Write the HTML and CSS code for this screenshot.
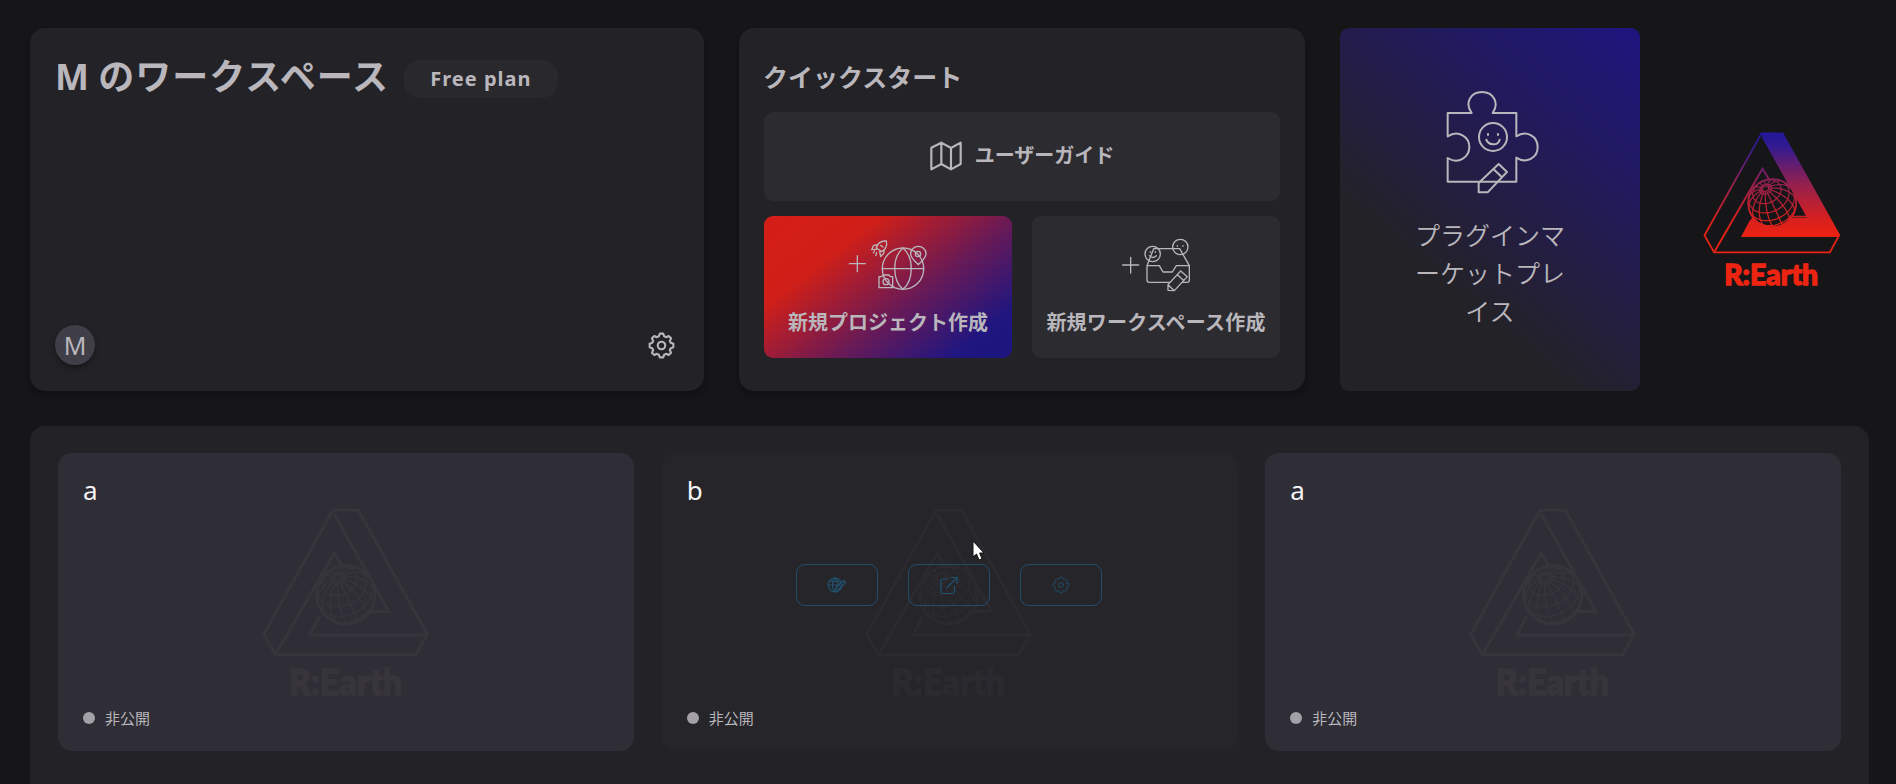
FILE: index.html
```html
<!DOCTYPE html>
<html lang="ja">
<head>
<meta charset="utf-8">
<title>R:Earth</title>
<link rel="stylesheet" href="styles.css">
</head>
<body>
<svg class="defs" width="0" height="0" aria-hidden="true">
  <defs>
    <linearGradient id="brand" gradientUnits="userSpaceOnUse" x1="0" y1="70" x2="0" y2="375">
      <stop offset="0" stop-color="#22199a"/>
      <stop offset="0.12" stop-color="#2f1a92"/>
      <stop offset="0.5" stop-color="#93204f"/>
      <stop offset="0.85" stop-color="#d8201e"/>
      <stop offset="1" stop-color="#e92214"/>
    </linearGradient>
    <symbol id="gear" viewBox="-13 -13 26 26">
      <path d="M11.4-1.6V1.6L8.9 2.6 8 4.4 9.2 6.9 6.9 9.2 4.4 8 2.6 8.9 1.6 11.4H-1.6L-2.6 8.9-4.4 8-6.9 9.2-9.2 6.9-8 4.4-8.9 2.6-11.4 1.6V-1.6L-8.9-2.6-8-4.4-9.2-6.9-6.9-9.2-4.4-8-2.6-8.9-1.6-11.4H1.6L2.6-8.9 4.4-8 6.9-9.2 9.2-6.9 8-4.4 8.9-2.6Z"/>
      <circle r="3.6"/>
    </symbol>
    <g id="globe">
      <circle cx="277" cy="280" r="72"/>
      <path class="globe-grid" d=""/>
    </g>
    <g id="frame">
      <path d="M245 71H308L478 377 450 428H103L74 377ZM248 80L383 321H335M270 213L248 177 105 424M213 332L188 379H478"/>
    </g>
  </defs>
</svg>

<main class="dashboard">
  <section class="panel workspace">
    <div class="workspace-head">
      <h1>M <span>のワークスペース</span></h1>
      <span class="plan">Free plan</span>
    </div>
    <div class="workspace-foot">
      <span class="avatar">M</span>
      <svg class="icon gear" width="27" height="27"><use href="#gear"/></svg>
    </div>
  </section>

  <section class="panel quick">
    <h2>クイックスタート</h2>
    <div class="tile guide">
      <svg class="icon" width="32" height="30" viewBox="-3 -3 96 90" stroke-width="6.500"><path d="M1 17L31 2 60 18 89 2V66L60 82 31 66 1 82ZM31 2V66M60 18V82"/></svg>
      <span>ユーザーガイド</span>
    </div>
    <div class="tiles">
      <div class="tile create project">
        <svg class="icon" width="85" height="57" viewBox="17 29 255 171" stroke-width="4">
          <path d="M27 115H75M51 91V139"/>
          <circle cx="188" cy="130" r="62"/>
          <path d="M126 130H250M188 68C155 96 155 164 188 192M188 68C221 96 221 164 188 192"/>
          <path d="M234 118C222 106 211 98 211 85A23 22 0 0 1 257 85C257 98 246 106 234 118Z"/>
          <circle cx="233" cy="86" r="8"/>
          <path d="M116 154H124L129 149H146L150 154H157V187H116Z"/><circle cx="137" cy="169" r="9"/>
          <path d="M138 47C122 46 111 54 108 68L124 79C136 72 141 61 138 47ZM109 58L99 61 94 73 108 72M132 73L130 84 121 94 118 79M103 77L99 83M109 82L106 91M121 60L128 65"/>
        </svg>
        <span>新規プロジェクト作成</span>
      </div>
      <div class="tile create">
        <svg class="icon" width="75" height="57" viewBox="29 31 225 171" stroke-width="4">
          <path d="M40 121H88M64 98V145"/>
          <path d="M113 123L133 72H211L240 123V166Q240 173 233 173H120Q113 173 113 166ZM113 123H150L161 142H189L201 123H240"/>
          <circle cx="130" cy="88" r="23"/><circle cx="213" cy="67" r="23"/>
          <path d="M120 93Q130 104 141 93M123 81V83M138 81V83M204 63V65M221 63V65"/>
          <path class="knock" d="M176 197V180L214 139 234 156 195 198ZM204 150L224 168M176 180L195 198"/>
        </svg>
        <span class="wide">新規ワークスペース作成</span>
      </div>
    </div>
  </section>

  <section class="market">
    <svg class="icon" width="100" height="107" viewBox="332 205 300 321" stroke-width="6">
      <path d="M355 280H427C405 250 424 217 458 217S511 250 490 280H561V350C591 330 625 350 625 382S591 434 561 414V486H355V415C387 435 420 413 420 382S387 330 355 350Z"/>
      <circle cx="491" cy="352" r="42"/>
      <path d="M471 360Q475 373 491 374T511 360M476 343V346M506 343V346"/>
      <path d="M448 518V490L508 433 533 457 475 518ZM492 448L518 473"/>
    </svg>
    <p>プラグインマーケットプレイス</p>
  </section>

  <div class="brand">
    <svg width="141" height="160" viewBox="67 61 422 480">
      <path fill="url(#brand)" fill-rule="evenodd" d="M245 71H308L478 378H188L216 325H383L248 85Z"/>
      <g class="brand-lines"><use href="#frame"/><use class="ball" href="#globe"/></g>
      <text x="133" y="526" textLength="282" lengthAdjust="spacingAndGlyphs">R:Earth</text>
    </svg>
  </div>

  <section class="panel projects">
    <article class="project-card">
      <svg class="watermark" width="171" height="196" viewBox="65 58 422 484">
        <use href="#frame"/><use class="ball" href="#globe"/>
        <text x="136" y="526" textLength="280" lengthAdjust="spacingAndGlyphs">R:Earth</text>
      </svg>
      <h3>a</h3>
      <div class="status"><i></i>非公開</div>
    </article>

    <article class="project-card hovered">
      <svg class="watermark" width="171" height="196" viewBox="65 58 422 484">
        <use href="#frame"/><use class="ball" href="#globe"/>
        <text x="136" y="526" textLength="280" lengthAdjust="spacingAndGlyphs">R:Earth</text>
      </svg>
      <h3>b</h3>
      <div class="actions">
        <span class="action"><svg width="20" height="18" viewBox="0 0 20 18"><circle cx="8" cy="9" r="6.8"/><path d="M1 9H13M2 5.5H12M8 2C4.5 6 4.5 12 8 16M8 2C11 5 11.500 8 10.500 11M8 14L10 10 17 4.500 18.500 6.500 12 13Z"/></svg></span>
        <span class="action"><svg width="20" height="20" viewBox="0 0 20 20"><path d="M9 4H3.500Q2 4 2 5.500V17Q2 18.500 3.500 18.500H14Q15.500 18.500 15.500 17V11M12 2.500H18V8.500M18 2.500L8 12.500"/></svg></span>
        <span class="action"><svg width="18" height="18" stroke-width="2"><use href="#gear"/></svg></span>
      </div>
      <div class="status"><i></i>非公開</div>
      <svg class="cursor" width="14" height="22" viewBox="0 0 14 22"><path d="M1 1V17L4.500 14 7 20 10 18.700 7.600 13H12Z"/></svg>
    </article>

    <article class="project-card">
      <svg class="watermark" width="171" height="196" viewBox="65 58 422 484">
        <use href="#frame"/><use class="ball" href="#globe"/>
        <text x="136" y="526" textLength="280" lengthAdjust="spacingAndGlyphs">R:Earth</text>
      </svg>
      <h3>a</h3>
      <div class="status"><i></i>非公開</div>
    </article>
  </section>
</main>
<script src="globe.js"></script>
</body>
</html>
```
FILE: styles.css
```css
* { box-sizing: border-box; }
body {
  margin: 0;
  background: #161618;
  color: #b9b6bc;
  font-family: "Noto Sans", "Noto Sans CJK JP", sans-serif;
}
h1, h2, h3, p { margin: 0; }
svg { display: block; }
.defs { position: absolute; }

.dashboard {
  display: grid;
  grid-template-columns: 674px 566px 300px 1fr;
  grid-template-rows: 363px 1fr;
  gap: 35px;
  height: 784px;
  padding: 28px 27px 0 30px;
}
.panel {
  background: #232226;
  border-radius: 15px;
  box-shadow: 0 4px 5px #111114;
}
.icon {
  fill: none;
  stroke: #b9b6bc;
  stroke-linecap: round;
  stroke-linejoin: round;
  overflow: visible;
}

.workspace {
  display: flex;
  flex-direction: column;
  justify-content: space-between;
  padding: 25px 29px 26px 25px;
}
.workspace-head { display: flex; align-items: center; gap: 15px; }
h1 { font-size: 36px; line-height: 48px; font-weight: 700; white-space: nowrap; }
h1 span { letter-spacing: 1px; }
.plan {
  width: 154px;
  height: 38px;
  margin-top: 4px;
  border-radius: 16px;
  background: #29282d;
  font-size: 20px;
  line-height: 37px;
  font-weight: 700;
  letter-spacing: 1px;
  text-align: center;
}
.workspace-foot { display: flex; justify-content: space-between; align-items: center; }
.avatar {
  width: 40px;
  height: 40px;
  border-radius: 50%;
  background: #403e47;
  box-shadow: 0 3px 5px #17171a;
  font-size: 25px;
  line-height: 41px;
  text-align: center;
}
.gear { stroke-width: 2; }

.quick { display: flex; flex-direction: column; padding: 31px 25px 33px 24px; }
h2 { height: 53px; font-size: 25px; line-height: 36px; font-weight: 700; }
.tile {
  display: flex;
  align-items: center;
  justify-content: center;
  border-radius: 9px;
  background: #2c2b30;
  font-size: 20px;
  font-weight: 700;
  white-space: nowrap;
}
.guide { height: 89px; gap: 13px; margin: 0 0 15px 1px; padding-bottom: 2px; }
.guide span { padding-bottom: 2px; }
.tiles { display: grid; grid-template-columns: 1fr 1fr; gap: 20px; height: 142px; margin-left: 1px; }
.create { flex-direction: column; justify-content: flex-start; gap: 15px; padding-top: 19px; }
.wide { letter-spacing: 0.2px; }
.project { background: linear-gradient(142deg, #d41e17 0%, #d01f18 27%, #691a56 59%, #1f1680 86%, #1d167f 100%); }
.knock { fill: #2c2b30; }

.market {
  display: flex;
  flex-direction: column;
  align-items: center;
  gap: 21px;
  padding-top: 60px;
  border-radius: 9px;
  background: linear-gradient(220deg, #1f147f 0%, #211a60 26%, #241e40 50%, #232226 69%);
}
.market p {
  width: 152px;
  font-size: 25px;
  line-height: 38px;
  font-weight: 350;
  text-align: center;
  line-break: anywhere;
}

.brand { display: flex; align-items: center; justify-content: center; }
.brand-lines { fill: none; stroke: url(#brand); stroke-width: 5.5; }
.brand .ball { fill: #161618; stroke-width: 5; }
.brand text { fill: #ee2412; stroke: #ee2412; stroke-width: 4; }
text { font-family: Lato, sans-serif; font-size: 88px; font-weight: 900; }
.globe-grid { fill: none; stroke-width: 3.6; }

.projects {
  grid-column: 1 / -1;
  display: grid;
  grid-template-columns: repeat(3, 1fr);
  grid-template-rows: 298px;
  gap: 28px;
  padding: 27px 28px;
  border-radius: 15px 15px 0 0;
  box-shadow: none;
}
.project-card {
  position: relative;
  display: grid;
  grid-template-rows: 1fr auto;
  padding: 17px 26px 22px 25px;
  border-radius: 14px;
  background: #2f2d36;
}
.project-card.hovered { background: #26252a; }
h3 { grid-area: 1 / 1; color: #f4f3f5; font-size: 26px; line-height: 40px; font-weight: 400; }
.status { grid-area: 2 / 1; display: flex; align-items: center; gap: 10px; font-size: 15px; line-height: 22px; }
.status i { width: 12px; height: 12px; border-radius: 50%; background: #a3a1a7; }
.watermark {
  grid-area: 1 / 1 / 3 / 2;
  place-self: center;
  margin-bottom: -6px;
  fill: none;
  stroke: #37353b;
  stroke-width: 7.5;
}
.watermark .ball { fill: #2f2d36; }
.watermark text { fill: #37353b; stroke-width: 4; }
.hovered .watermark { stroke: #2b2a2f; }
.hovered .watermark .ball { fill: #26252a; }
.hovered .watermark text { fill: #2b2a2f; }
.actions {
  grid-area: 1 / 1 / 3 / 2;
  place-self: center;
  display: flex;
  gap: 30px;
  margin-top: -29px;
}
.action {
  display: grid;
  place-items: center;
  width: 82px;
  height: 42px;
  border: 1px solid #244c69;
  border-radius: 9px;
}
.action svg { fill: none; stroke: #215270; stroke-width: 1.2; stroke-linecap: round; stroke-linejoin: round; }
.cursor {
  position: absolute;
  left: 310px;
  top: 87px;
  fill: #fff;
  stroke: #111;
  stroke-width: 1;
}
```
FILE: globe.js
```js
// Orthographic graticule of a tilted globe, written as one SVG path.
(function () {
  var R = 72, cx = 277, cy = 280, view = 49 * Math.PI / 180, tilt = -25 * Math.PI / 180;
  function project(lat, lon) {
    lat *= Math.PI / 180; lon *= Math.PI / 180;
    var x = R * Math.cos(lat) * Math.sin(lon);
    var y = -R * (Math.sin(lat) * Math.cos(view) - Math.cos(lat) * Math.cos(lon) * Math.sin(view));
    var z = Math.sin(lat) * Math.sin(view) + Math.cos(lat) * Math.cos(lon) * Math.cos(view);
    return z < 0 ? null : (cx + x * Math.cos(tilt) - y * Math.sin(tilt)).toFixed(1) + ' ' +
      (cy + x * Math.sin(tilt) + y * Math.cos(tilt)).toFixed(1);
  }
  var d = '';
  function trace(points) {
    var pen = 'M';
    points.forEach(function (p) {
      if (!p) { pen = 'M'; return; }
      d += pen + p;
      pen = 'L';
    });
  }
  var lat, lon, pts;
  [75, 52, 29, 6, -17].forEach(function (l) {
    pts = [];
    for (lon = -180; lon <= 180; lon += 5) pts.push(project(l, lon));
    trace(pts);
  });
  for (lon = 0; lon < 360; lon += 24) {
    pts = [];
    for (lat = 84; lat >= -60; lat -= 4) pts.push(project(lat, lon));
    trace(pts);
  }
  document.querySelector('.globe-grid').setAttribute('d', d);
})();
```
